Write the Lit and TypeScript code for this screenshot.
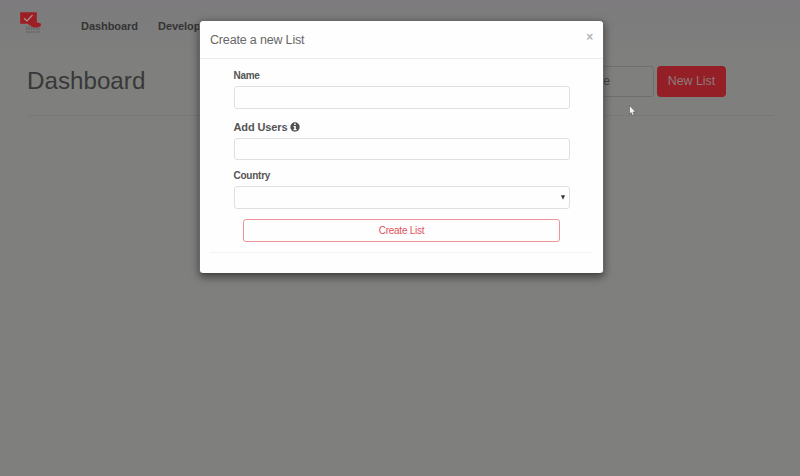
import { LitElement, html, css } from "lit";
import { customElement } from "lit/decorators.js";

@customElement("page-shell")
class PageShell extends LitElement {
  static styles = css`
    :host { display: block; height: 476px; color: #383838; }
    nav { display: flex; height: 50px; box-sizing: border-box; padding: 10px 0 0 18px; font-weight: bold; font-size: 11px; letter-spacing: -.05px; color: #343434; }
    .logo { width: 28px; height: 25px; margin-right: 35px; flex: none; }
    .link { margin-right: 20px; padding-top: 10px; line-height: 13px; }
    .head { display: flex; align-items: flex-start; margin: 0 26px 0 27px; height: 65px; border-bottom: 1px solid #777977; }
    h1 { font-weight: normal; font-size: 24.2px; line-height: 30px; margin: 16px 0 0; flex: 1; }
    .field { box-sizing: border-box; width: 128px; height: 31px; border: 1px solid #6e6f6e; border-radius: 3px; margin: 16px 3px 0 0; padding-left: 76px; font-size: 12.5px; line-height: 29px; color: #444; }
    .btn { box-sizing: border-box; width: 69px; height: 31px; border-radius: 4px; margin: 16px 48px 0 0; background: #941f26; color: #8f7c7c; font-size: 12.4px; line-height: 30px; text-align: center; }
  `;
  render() {
    return html`
      <nav>
        <svg class="logo" viewBox="0 0 28 25">
          <path d="M2.2 2.3H18.8V12.3L22.8 13.4V16L19.8 17.6H15.5L12 15.5L9.5 13.7H2.2Z" fill="#9c1f23" />
          <path d="M6 8.2L9 11L14.5 5" fill="none" stroke="#a89494" stroke-width="1.2" />
          <path d="M8 17H14M8 19H22M8 22H22" stroke="#555" stroke-width="1.4" stroke-dasharray="1.5 1" opacity=".65" />
        </svg>
        <span class="link">Dashboard</span><span class="link">Developers</span>
      </nav>
      <div class="head">
        <h1>Dashboard</h1>
        <div class="field">e</div>
        <div class="btn">New List</div>
      </div>`;
  }
}

@customElement("list-dialog")
class ListDialog extends LitElement {
  static styles = css`
    :host { display: block; box-sizing: border-box; width: 405px; height: 254px; background: #fefefe; border: 1px solid #686868; border-bottom-color: #484848; border-radius: 4px; box-shadow: 0 3px 8px rgba(0,0,0,.5); color: #555; }
    header { display: flex; justify-content: space-between; box-sizing: border-box; height: 38px; padding: 10px 10px 0; border-bottom: 1px solid #ebebeb; font-size: 12.5px; letter-spacing: -.17px; line-height: 18px; color: #686868; }
    .close { font-size: 12px; font-weight: bold; line-height: 12px; color: #b4b4b4; }
    form { display: flex; flex-direction: column; margin: 0 33.5px; }
    label { display: flex; align-items: center; font-size: 10px; letter-spacing: -.3px; font-weight: bold; height: 14px; }
    .name { margin: 9px 0 4px; }
    .users { margin: 11px 0 4px; font-size: 11px; letter-spacing: -.12px; gap: 3px; }
    .country { margin: 8px 0 4px; letter-spacing: -.25px; }
    .input { box-sizing: border-box; height: 23px; border: 1px solid #dedfe0; border-radius: 3px; flex: none; }
    .short { height: 22px; }
    .select { display: flex; align-items: center; justify-content: flex-end; padding-right: 4px; }
    .create { box-sizing: border-box; height: 23px; margin: 10px 9.5px 0; border: 1px solid #ed9297; border-radius: 3px; font-size: 10px; letter-spacing: -.25px; line-height: 21px; text-align: center; color: #e3505a; }
    .rule { margin: 10px 10px 0; border-top: 1px solid #f2f2f2; }
  `;
  render() {
    return html`
      <header><span>Create a new List</span><span class="close">×</span></header>
      <form>
        <label class="name">Name</label>
        <div class="input"></div>
        <label class="users">Add Users
          <svg width="10" height="10" viewBox="0 0 10 10">
            <circle cx="5" cy="5" r="4.7" fill="#505050" />
            <path d="M4.2 1.5H5.8V3H4.2ZM3.5 4H5.8V7.1H6.5V8.3H3.5V7.1H4.2V5.1H3.5Z" fill="#fff" />
          </svg>
        </label>
        <div class="input short"></div>
        <label class="country">Country</label>
        <div class="input select">
          <svg width="4" height="5" viewBox="0 0 4 5"><path d="M0 .3H4L2 4.8Z" fill="#333" /></svg>
        </div>
        <div class="create">Create List</div>
      </form>
      <div class="rule"></div>`;
  }
}

@customElement("app-root")
class AppRoot extends LitElement {
  static styles = css`
    :host { display: block; position: relative; width: 800px; height: 476px; overflow: hidden; background: linear-gradient(#7d7b7d 0, #7e7e7d 45px, #7f807e 60px); font-family: "Liberation Sans", Arial, sans-serif; }
    .dialog { position: absolute; left: 199px; top: 20px; }
    .cursor { position: absolute; left: 629px; top: 105px; }
  `;
  render() {
    return html`
      <page-shell></page-shell>
      <list-dialog class="dialog"></list-dialog>
      <svg class="cursor" width="7" height="11" viewBox="0 0 7 11">
        <path d="M.5 .5V9L2.3 7.6L3.5 10.4L5.1 9.6L4 7H6.7Z" fill="#f4f4f4" stroke="#444" stroke-width=".5" />
      </svg>`;
  }
}
